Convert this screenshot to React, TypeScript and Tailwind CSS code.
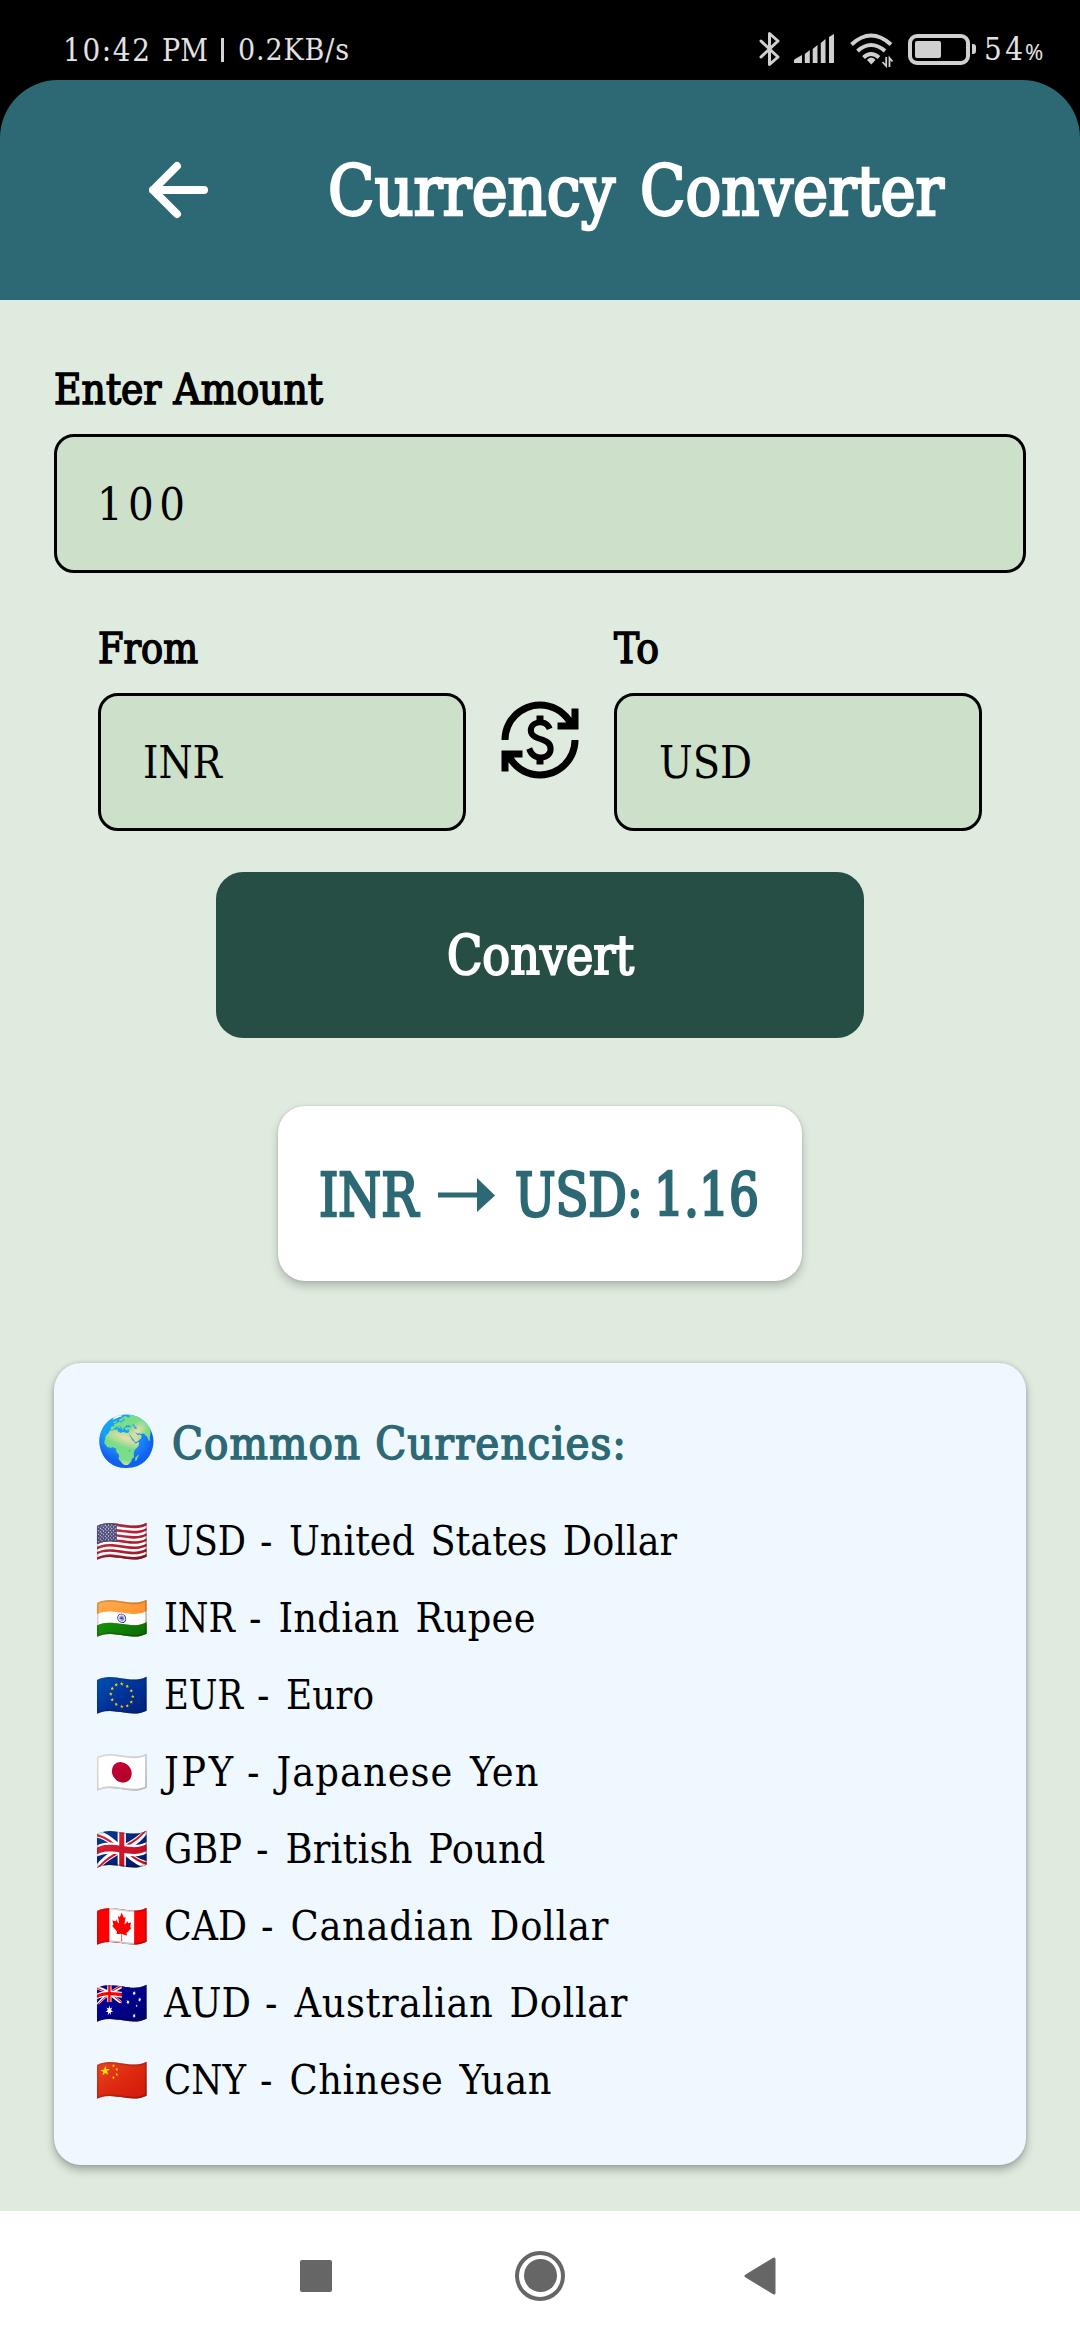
import { useLayoutEffect, useRef, useState } from 'react';
import { MdCurrencyExchange } from 'react-icons/md';

/**
 * A single line of text that spans `width` pixels: wide text is condensed,
 * narrow text gets extra tracking.
 */
function FitText({ text, width, className = '' }: { text: string; width: number; className?: string }) {
  const ref = useRef<HTMLSpanElement>(null);
  const [fit, setFit] = useState({ letterSpacing: 0, transform: 'none' });
  useLayoutEffect(() => {
    const natural = ref.current!.getBoundingClientRect().width;
    setFit(
      natural > width
        ? { letterSpacing: 0, transform: `scaleX(${width / natural})` }
        : { letterSpacing: (width - natural) / Math.max(1, text.length - 1), transform: 'none' },
    );
  }, []);
  return (
    <span className={'block whitespace-nowrap text-left ' + className} style={{ width }}>
      <span ref={ref} className="inline-block origin-left" style={fit}>{text}</span>
    </span>
  );
}

const currencies = [
  { flag: '🇺🇸', code: 'USD', codeWidth: 82, name: 'United States Dollar', nameWidth: 388 },
  { flag: '🇮🇳', code: 'INR', codeWidth: 71, name: 'Indian Rupee', nameWidth: 257 },
  { flag: '🇪🇺', code: 'EUR', codeWidth: 79, name: 'Euro', nameWidth: 88 },
  { flag: '🇯🇵', code: 'JPY', codeWidth: 69, name: 'Japanese Yen', nameWidth: 262 },
  { flag: '🇬🇧', code: 'GBP', codeWidth: 78, name: 'British Pound', nameWidth: 260 },
  { flag: '🇨🇦', code: 'CAD', codeWidth: 83, name: 'Canadian Dollar', nameWidth: 318 },
  { flag: '🇦🇺', code: 'AUD', codeWidth: 87, name: 'Australian Dollar', nameWidth: 333 },
  { flag: '🇨🇳', code: 'CNY', codeWidth: 82, name: 'Chinese Yuan', nameWidth: 262 },
];

function StatusBar() {
  return (
    <div className="flex h-20 items-center bg-black text-[#e2e2e2]">
      <div className="flex h-full w-[759px] items-center pt-[20px] pl-[63px] text-[31px] leading-none">
        <FitText text="10:42" width={87} />
        <FitText text="PM" width={46} className="ml-3" />
        <span className="ml-[13px] h-6 w-[3px] bg-[#d4d4d4]" />
        <FitText text="0.2KB/s" width={111} className="ml-[14px] text-[30px]" />
      </div>
      <svg className="mt-[18px] h-[36px] w-[21px]" viewBox="0 0 21 36" fill="none" stroke="#d0d0d0" strokeWidth="3" strokeLinejoin="round" strokeLinecap="round">
        <path d="M2 10 19 26 10.5 33.5V2.500L19 10 2 26" />
      </svg>
      <svg className="mt-[17px] ml-[14px] h-[29px] w-[40px]" viewBox="0 0 40 29" fill="#d0d0d0">
        <path d="M0 26.500Q0 25.500 1 25L8 21V29H0ZM10.800 20 15.800 16V29H10.800ZM18.700 15 23.500 11V29H18.700ZM26.800 9 31.500 5V29H26.800ZM35 3 40 0V29H35Z" />
      </svg>
      <svg className="mt-[20px] ml-[16px] h-[35px] w-[43px]" viewBox="0 0 43 35" fill="none" stroke="#d0d0d0" strokeWidth="4">
        <path d="M1.500 11.500Q21 -6.500 41 11.500M7.500 18Q21 6 35 18M13.500 24.500Q21 17.500 29 24.500" />
        <path d="M21.300 24.500Q24 24.500 25.500 27L21.300 31.500 17 27Q18.500 24.500 21.300 24.500Z" fill="#d0d0d0" stroke="none" />
        <path d="M36.200 24V33L32.500 29M39.500 34V25L42.500 28.500" strokeWidth="1.800" />
      </svg>
      <div className="mt-[18px] ml-[15px] flex items-center">
        <div className="h-[31px] w-[62px] rounded-[9px] border-4 border-[#d0d0d0] p-[3px]">
          <div className="h-full w-[26px] rounded-[2px] bg-[#d0d0d0]" />
        </div>
        <div className="ml-[2px] h-[10px] w-[4px] rounded-r-[3px] bg-[#d0d0d0]" />
      </div>
      <div className="ml-[8px] flex items-baseline pt-[19px] text-[31px] leading-none">
        <FitText text="54" width={39} />
        <span className="ml-[2px] font-['Noto_Sans'] text-[22px]">%</span>
      </div>
    </div>
  );
}

function Header() {
  return (
    <div className="bg-black">
      <header className="flex h-[220px] items-center rounded-t-[58px] bg-[#2d6974] text-white">
        <svg className="ml-[149px] h-[58px] w-[60px]" viewBox="0 0 60 58" fill="none" stroke="#fff" strokeWidth="8" strokeLinecap="round" strokeLinejoin="round">
          <path d="M28 5 4 29 28 53M4 29H55" />
        </svg>
        <h1 className="ml-[119px] flex gap-[25px] pt-[3px] text-[69px] leading-none [-webkit-text-stroke:2.500px_white]">
          <FitText text="Currency" width={287} />
          <FitText text="Converter" width={304} />
        </h1>
      </header>
    </div>
  );
}

function Field({ label, labelWidth, value, valueWidth, className }: { label: string; labelWidth: number; value: string; valueWidth: number; className: string }) {
  return (
    <div className="flex flex-col">
      <div className="flex h-[89px] items-center text-[42px] leading-none [-webkit-text-stroke:1.500px_black]">
        <FitText text={label} width={labelWidth} />
      </div>
      <div className={'flex items-center rounded-[20px] border-3 border-black bg-[#cde0c9] text-[45px] leading-none ' + className}>
        <FitText text={value} width={valueWidth} />
      </div>
    </div>
  );
}

export default function App() {
  return (
    <div className="flex h-[2340px] w-[1080px] flex-col overflow-hidden bg-[#e0ebdf] font-['DejaVu_Serif_Condensed','DejaVu_Serif',serif] text-black">
      <StatusBar />
      <Header />
      <main className="flex flex-1 flex-col px-[54px] pt-[45px]">
        <Field label="Enter Amount" labelWidth={269} value="100" valueWidth={88} className="h-[139px] pt-[2px] pl-[40px]" />
        <div className="mt-[31px] flex justify-between px-[44px]">
          <Field label="From" labelWidth={100} value="INR" valueWidth={79} className="h-[138px] w-[368px] pl-[42px]" />
          <MdCurrencyExchange className="mt-[94px] size-[84px]" />
          <Field label="To" labelWidth={45} value="USD" valueWidth={93} className="h-[138px] w-[368px] pl-[42px]" />
        </div>
        <button className="mt-[41px] flex h-[166px] w-[648px] items-center justify-center self-center rounded-[27px] bg-[#274e45] pt-px text-[54px] leading-none text-white [-webkit-text-stroke:2px_white]">
          <FitText text="Convert" width={187} />
        </button>
        <div className="mt-[68px] flex h-[175px] w-[524px] items-center self-center rounded-[27px] bg-white pt-[3px] pl-[41px] text-[59px] leading-none text-[#2d6974] shadow-[0_5px_10px_rgba(0,0,0,0.22),0_0_3px_rgba(0,0,0,0.12)] [-webkit-text-stroke:2.500px_#2d6974]">
          <FitText text="INR" width={99} />
          <svg className="ml-[20px] h-[34px] w-[57px]" viewBox="0 0 57 34" fill="#2d6974">
            <path d="M0 14.500H39V0L57 17.500 39 34V19.500H0Z" />
          </svg>
          <FitText text="USD:" width={128} className="ml-[20px]" />
          <FitText text="1.16" width={105} className="ml-[11px]" />
        </div>
        <section className="mt-[82px] h-[802px] rounded-[27px] bg-[#f0f8ff] pt-[50px] pl-[43px] shadow-[0_5px_10px_rgba(0,0,0,0.28),0_0_4px_rgba(0,0,0,0.14)]">
          <h2 className="flex h-[60px] items-center text-[45px] leading-none text-[#2d6974] [-webkit-text-stroke:1.500px_#2d6974]">
            <span className="-mt-[3px] -ml-px w-[76px] text-[49px] [-webkit-text-stroke:0]">🌍</span>
            <FitText text="Common Currencies:" width={454} />
          </h2>
          <ul className="mt-[30px] text-[41px] leading-none">
            {currencies.map((c) => (
              <li key={c.code} className="flex h-[77px] items-center">
                <span className="-ml-[2px] w-[69px] text-[43px]">{c.flag}</span>
                <FitText text={c.code} width={c.codeWidth} />
                <span className="ml-[14px]">-</span>
                <FitText text={c.name} width={c.nameWidth} className="ml-[17px] [word-spacing:4px]" />
              </li>
            ))}
          </ul>
        </section>
      </main>
      <nav className="flex h-[129px] items-center bg-white">
        <div className="ml-[300px] size-8 rounded-[2px] bg-[#666]" />
        <div className="ml-[183px] flex size-[50px] items-center justify-center rounded-full border-4 border-[#666]">
          <div className="size-[33px] rounded-full bg-[#666]" />
        </div>
        <svg className="ml-[179px] h-[38px] w-[32px]" viewBox="0 0 32 38" fill="#666" stroke="#666" strokeWidth="3" strokeLinejoin="round">
          <path d="M2 19 30 2V36Z" />
        </svg>
      </nav>
    </div>
  );
}
